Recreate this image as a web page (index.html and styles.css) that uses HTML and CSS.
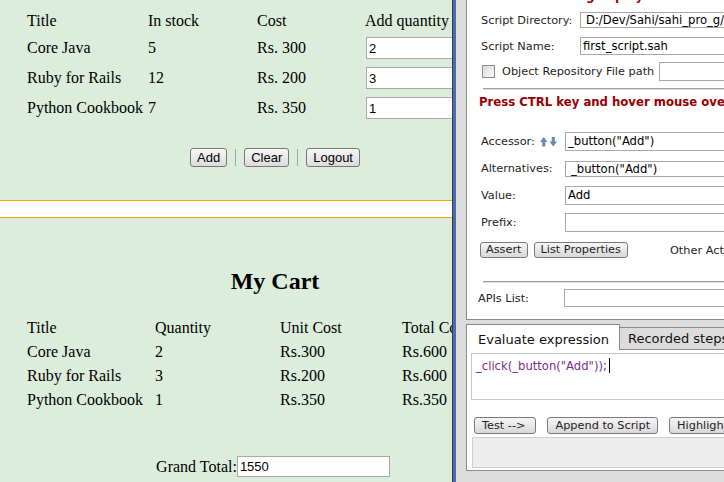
FILE: index.html
```html
<!DOCTYPE html>
<html>
<head>
<meta charset="utf-8">
<title>Sahi - Bookstore</title>
<link rel="stylesheet" href="styles.css">
</head>
<body>
<div class="screen">
  <div class="page">
    <section class="frame frame-top">
      <div class="frame-inner">
        <div class="stock">
          <div class="cell">Title</div><div class="cell">In stock</div><div class="cell">Cost</div><div class="cell">Add quantity to cart</div>
          <div class="cell">Core Java</div><div class="cell">5</div><div class="cell">Rs. 300</div><div class="cell"><input class="qty" type="text" value="2"></div>
          <div class="cell">Ruby for Rails</div><div class="cell">12</div><div class="cell">Rs. 200</div><div class="cell"><input class="qty" type="text" value="3"></div>
          <div class="cell">Python Cookbook</div><div class="cell">7</div><div class="cell">Rs. 350</div><div class="cell"><input class="qty" type="text" value="1"></div>
        </div>
        <div class="actions">
          <button class="btn">Add</button>
          <span class="sep"></span>
          <button class="btn">Clear</button>
          <span class="sep"></span>
          <button class="btn">Logout</button>
        </div>
      </div>
    </section>
    <div class="frame-divider"></div>
    <section class="frame frame-bottom">
      <div class="frame-inner">
        <h2 class="cart-title">My Cart</h2>
        <div class="cart">
          <div class="cell">Title</div><div class="cell">Quantity</div><div class="cell">Unit Cost</div><div class="cell">Total Cost</div>
          <div class="cell">Core Java</div><div class="cell">2</div><div class="cell">Rs.300</div><div class="cell">Rs.600</div>
          <div class="cell">Ruby for Rails</div><div class="cell">3</div><div class="cell">Rs.200</div><div class="cell">Rs.600</div>
          <div class="cell">Python Cookbook</div><div class="cell">1</div><div class="cell">Rs.350</div><div class="cell">Rs.350</div>
        </div>
        <div class="grand">
          <span>Grand Total:</span>
          <input class="grand-input" type="text" value="1550">
        </div>
      </div>
    </section>
  </div>

  <div class="edge"></div>

  <div class="controller">
    <div class="recorder">
      <div class="title">Recorder settings - playback and recording options</div>
      <div class="row row-dir">
        <span class="label-a">Script Directory:</span>
        <span class="field field-short pad5">D:/Dev/Sahi/sahi_pro_g/userdata/scripts</span>
      </div>
      <div class="row row-name">
        <span class="label-a">Script Name:</span>
        <span class="field field-name">first_script.sah</span>
      </div>
      <div class="row row-repo">
        <span class="checkbox"></span>
        <span class="repo-label">Object Repository File path</span>
        <span class="field field-repo"></span>
      </div>
      <div class="rule"></div>
      <div class="warn">Press CTRL key and hover mouse over any element</div>

      <div class="group">
        <div class="row row2">
          <span class="label-b">Accessor:
            <svg class="arrows" width="17" height="10" viewBox="0 0 17 10">
              <path d="M0 5 L3.75 0 L7.5 5 L5.3 5 L5.3 9.5 L2.2 9.5 L2.2 5 Z" fill="#6a88b2"/>
              <path d="M9.5 4.5 L13.25 9.5 L17 4.5 L14.8 4.5 L14.8 0 L11.7 0 L11.7 4.5 Z" fill="#6a88b2"/>
            </svg>
          </span>
          <span class="field">_button("Add")</span>
        </div>
        <div class="row row2">
          <span class="label-b">Alternatives:</span>
          <span class="field field-alt">_button("Add")</span>
        </div>
        <div class="row row2">
          <span class="label-b">Value:</span>
          <span class="field">Add</span>
        </div>
        <div class="row row2">
          <span class="label-b">Prefix:</span>
          <span class="field"></span>
        </div>
        <div class="row row-btns">
          <button class="pbtn assert">Assert</button>
          <button class="pbtn">List Properties</button>
          <span class="other">Other Actions</span>
        </div>
      </div>
      <div class="rule rule2"></div>
      <div class="row row-apis">
        <span class="label-c">APIs List:</span>
        <span class="field field-apis"></span>
      </div>
    </div>

    <div class="tabs">
      <div class="tabstrip">
        <div class="tab tab-active">Evaluate expression</div>
        <div class="tab tab-idle">Recorded steps</div>
      </div>
      <div class="tabbody">
        <div class="code">_click(_button("Add"));<span class="caret"></span></div>
        <div class="evalbtns">
          <button class="pbtn ebtn test">Test --&gt;</button>
          <button class="pbtn ebtn">Append to Script</button>
          <button class="pbtn ebtn">Highlight</button>
        </div>
        <div class="status"></div>
      </div>
    </div>
  </div>
</div>
</body>
</html>
```

FILE: styles.css
```css
* { box-sizing: border-box; }
html, body { margin: 0; padding: 0; }
body {
  width: 724px;
  height: 482px;
  overflow: hidden;
  background: #dcdcdc;
}
.screen {
  display: flex;
  width: 724px;
  height: 482px;
  overflow: hidden;
}

/* ---------- left: web page ---------- */
.page {
  width: 452px;
  flex: none;
  display: flex;
  flex-direction: column;
  overflow: hidden;
  background: #ddeddc;
  font-family: "Liberation Serif", "Times New Roman", serif;
  font-size: 16px;
  color: #000;
}
.frame { overflow: hidden; }
.frame-top { height: 200px; flex: none; }
.frame-bottom { flex: 1; }
.frame-inner { width: 550px; }
.frame-divider {
  height: 18px;
  flex: none;
  background: #fff;
  border-top: 1px solid #f0a40c;
  border-bottom: 1px solid #f0a40c;
}
.cell { white-space: nowrap; }

.stock {
  display: grid;
  grid-template-columns: 121px 109px 108px 200px;
  grid-template-rows: 25px 30px 30px 30px;
  align-items: center;
  padding: 8px 0 0 27px;
}
.qty {
  display: block;
  width: 150px;
  height: 22px;
  margin: 0 0 0 1px;
  padding: 0 2px;
  border: 1px solid #a8a8a8;
  background: #fff;
  font: 13px "Liberation Sans", Arial, sans-serif;
  color: #000;
}
.actions {
  display: flex;
  justify-content: center;
  align-items: center;
  gap: 8px;
  margin-top: 25px;
}
.btn {
  height: 19px;
  padding: 0 6px;
  margin: 0;
  border: 1px solid #777;
  border-radius: 3px;
  background: linear-gradient(#f7f7f7, #dcdcdc);
  font: 13px/17px "Liberation Sans", Arial, sans-serif;
  color: #000;
}
.sep {
  width: 1px;
  height: 17px;
  background: #9ea2b6;
}

.cart-title {
  margin: 50px 0 0;
  font: bold 24px/27px "Liberation Serif", "Times New Roman", serif;
  text-align: center;
}
.cart {
  display: grid;
  grid-template-columns: 128px 125px 122px 150px;
  grid-auto-rows: 24px;
  align-items: center;
  padding-left: 27px;
  margin-top: 21px;
}
.grand {
  display: flex;
  justify-content: center;
  align-items: center;
  gap: 0;
  margin-top: 44px;
  padding-right: 4px;
}
.grand-input {
  width: 153px;
  height: 21px;
  margin: 0;
  padding: 0 2px;
  border: 1px solid #a8a8a8;
  background: #fff;
  font: 13px "Liberation Sans", Arial, sans-serif;
  color: #000;
}

/* ---------- window edge ---------- */
.edge {
  width: 4px;
  flex: none;
  border-left: 1px solid #3a3a3a;
  background: #4a6cb2;
}

/* ---------- right: Sahi controller ---------- */
.controller {
  flex: 1;
  min-width: 0;
  overflow: hidden;
  background: #dcdcdc;
  padding-left: 10px;
  font-family: "DejaVu Sans", Verdana, sans-serif;
  font-size: 11.3px;
  color: #1e1e1e;
}
.recorder {
  width: 420px;
  margin-top: -12px;
  background: #fff;
  border: 1px solid #8c8c8c;
  padding: 0 0 10px 14px;
}
.title {
  height: 15px;
  line-height: 15px;
  color: #980000;
  font-weight: bold;
  font-size: 12px;
  white-space: nowrap;
}
.row {
  display: flex;
  align-items: center;
  white-space: nowrap;
}
.row-dir { height: 32px; }
.row-name { height: 20px; }
.row-repo { height: 30px; }
.label-a { width: 99px; flex: none; }
.label-b { width: 84px; flex: none; display: flex; align-items: center; }
.label-c { width: 86px; flex: none; margin-left: -3px; }
.field {
  flex: none;
  width: 300px;
  height: 19px;
  line-height: 17px;
  padding: 0 2px;
  border: 1px solid #a8a8a8;
  background: #fff;
  font-size: 11.6px;
  color: #000;
  overflow: hidden;
}
.field-short { height: 16px; line-height: 14px; }
.pad5 { padding-left: 5px; }
.field-name { height: 18px; line-height: 16px; }
.field-alt { height: 16px; line-height: 14px; padding-left: 5px; }
.field-apis { height: 18px; margin-left: 0; }
.checkbox {
  width: 13px;
  height: 13px;
  flex: none;
  margin-left: 1px;
  border: 1px solid #8e8e8e;
  background: linear-gradient(135deg, #dcdcdc, #f8f8f8);
}
.repo-label { margin-left: 7px; }
.field-repo { margin-left: 5px; }
.rule {
  height: 2px;
  margin: 2px 0 0 2px;
  border-top: 1px solid #a0a0a0;
  border-bottom: 1px solid #dedede;
}
.rule2 { margin-top: 17px; }
.warn {
  height: 16px;
  line-height: 16px;
  margin: 4px 0 0 -2px;
  color: #980000;
  font-weight: bold;
  font-size: 11.7px;
  white-space: nowrap;
}
.group { margin-top: 18px; }
.row2 { height: 27px; }
.arrows { margin-left: 5px; }
.row-btns { height: 28px; }
.pbtn {
  height: 16px;
  margin: 0;
  padding: 0 6px;
  border: 1px solid #7a7a7a;
  border-radius: 3px;
  background: linear-gradient(#f6f6f6, #d8d8d8);
  font-family: "DejaVu Sans", Verdana, sans-serif;
  font-size: 11.3px;
  line-height: 14px;
  color: #1e1e1e;
  white-space: nowrap;
}
.assert { margin-left: -1px; margin-right: 6px; padding: 0 5px; }
.other { margin-left: 42px; }
.row-apis { height: 22px; margin-top: 4px; }

.tabs { width: 420px; margin-top: 4px; }
.tabstrip {
  display: flex;
  align-items: flex-end;
  height: 26px;
}
.tab {
  font-size: 13px;
  white-space: nowrap;
  color: #111;
}
.tab-active {
  width: 154px;
  height: 26px;
  flex: none;
  padding: 4px 0 0 11px;
  line-height: 21px;
  background: #fff;
  border: 1px solid #8c8c8c;
  border-bottom: none;
}
.tab-idle {
  flex: 1;
  height: 23px;
  padding-left: 8px;
  line-height: 21px;
  background: #dcdcdc;
  border: 1px solid #8c8c8c;
  border-left: none;
}
.tabbody {
  background: #fff;
  border: 1px solid #8c8c8c;
  border-top: none;
  padding: 3px 0 2px 4px;
}
.code {
  width: 400px;
  height: 47px;
  padding: 4px;
  border: 1px solid #c8c8c8;
  line-height: 16px;
  font-size: 11.6px;
  color: #7b2d8e;
  white-space: nowrap;
}
.caret {
  display: inline-block;
  width: 1px;
  height: 15px;
  margin-left: 2px;
  vertical-align: -3px;
  background: #000;
}
.evalbtns {
  display: flex;
  gap: 11px;
  margin: 17px 0 0 3px;
}
.ebtn { height: 17px; padding: 0 7px; line-height: 15px; }
.test { padding: 0 10px 0 7px; }
.status {
  width: 400px;
  height: 31px;
  margin: 3px 0 0 1px;
  border: 1px solid #cfcfcf;
  background: #ededed;
}
```
